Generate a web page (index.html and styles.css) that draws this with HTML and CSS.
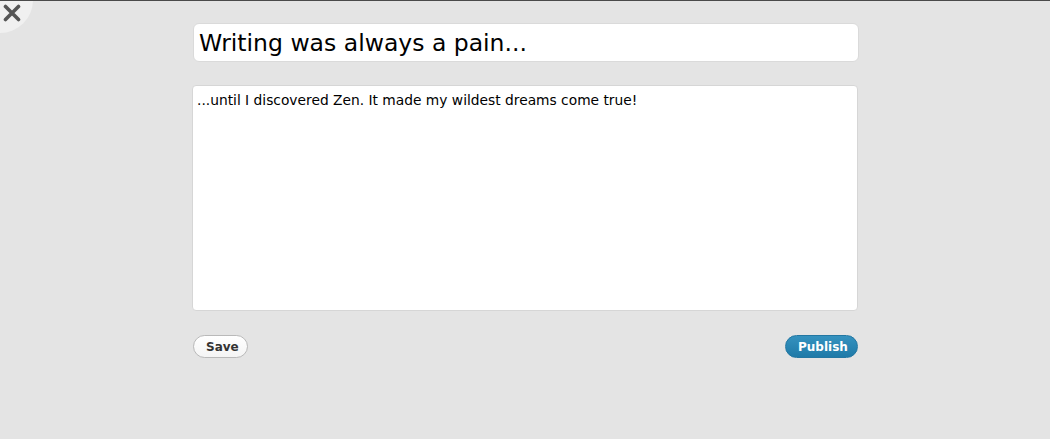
FILE: index.html
```html
<!DOCTYPE html>
<html>
<head>
<meta charset="utf-8">
<link rel="stylesheet" href="styles.css">
</head>
<body>
<div class="close-wrap">
  <button class="close" aria-label="Close">
    <svg width="18" height="18" viewBox="0 0 18 18"><path d="M2.5 2.5 L15.5 15.5 M15.5 2.5 L2.5 15.5" stroke="#555" stroke-width="3.6" stroke-linecap="round"/></svg>
  </button>
</div>
<main class="editor">
  <div class="title-box">Writing was always a pain...</div>
  <div class="body-box">...until I discovered Zen. It made my wildest dreams come true!</div>
  <div class="actions">
    <button class="btn save">Save</button>
    <button class="btn publish">Publish</button>
  </div>
</main>
</body>
</html>
```
FILE: styles.css
```css
html, body {
  margin: 0;
  padding: 0;
}
body {
  background: #e4e4e4;
  border-top: 1px solid #4a4a4a;
  height: 438px;
  font-family: "DejaVu Sans", Verdana, sans-serif;
  position: relative;
  overflow: hidden;
}
.close-wrap {
  position: absolute;
  left: -33px;
  top: -34px;
  width: 66px;
  height: 66px;
  border-radius: 50%;
  background: #f0f0f0;
}
.close {
  position: absolute;
  left: 36px;
  top: 37px;
  border: 0;
  padding: 0;
  background: none;
  width: 18px;
  height: 18px;
}
.close svg { display: block; }
.editor {
  width: 667px;
  margin: 0 auto;
  padding-top: 22px;
  padding-left: 1px;
}
.title-box {
  box-sizing: border-box;
  height: 39px;
  margin-left: 1px;
  background: #fff;
  border: 1px solid #dadada;
  border-radius: 6px;
  padding: 2px 5px 0;
  font-size: 23.5px;
  line-height: 34px;
  color: #000;
}
.body-box {
  box-sizing: border-box;
  height: 226px;
  margin-top: 23px;
  margin-right: 1px;
  background: #fff;
  border: 1px solid #d6d6d6;
  border-radius: 4px;
  padding: 5px 4px;
  font-size: 13.8px;
  line-height: 18px;
  color: #000;
}
.actions {
  display: flex;
  justify-content: space-between;
  margin-top: 24px;
  padding-left: 1px;
  padding-right: 1px;
}
.btn {
  font-family: "DejaVu Sans", Verdana, sans-serif;
  font-weight: bold;
  font-size: 12px;
  height: 23px;
  border-radius: 12px;
  padding: 0 12px;
  line-height: 20px;
}
.save {
  width: 55px;
  background: linear-gradient(#ffffff, #f4f4f4);
  border: 1px solid #b9b9b9;
  color: #333;
}
.publish {
  width: 73px;
  background: linear-gradient(#3592bf, #1f7aa8);
  border: 1px solid #2377a2;
  color: #fff;
}
```
